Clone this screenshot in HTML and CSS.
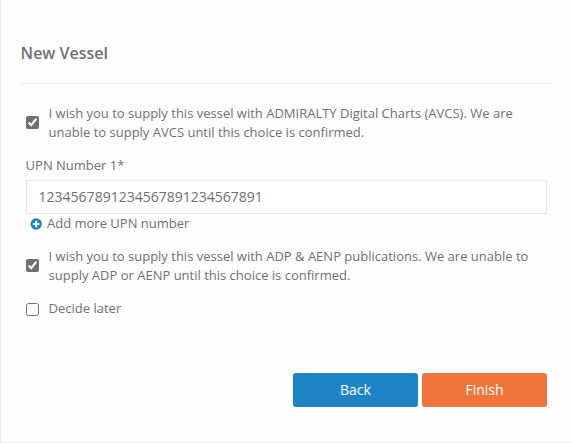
FILE: index.html
```
<!DOCTYPE html>
<html lang="en">
<head>
    <meta charset="UTF-8">
    <title>New Vessel</title>
    <link rel="stylesheet" href="styles.css">
</head>
<body>
    <div class="panel">
        <h2 class="title">New Vessel</h2>
        <form class="vessel-form">
            <label class="check">
                <input type="checkbox" checked>
                <span>I wish you to supply this vessel with ADMIRALTY Digital Charts (AVCS). We are<br>unable to supply AVCS until this choice is confirmed.</span>
            </label>
            <label class="upn-label" for="upn">UPN Number 1*</label>
            <input class="upn-input" id="upn" type="text" value="1234567891234567891234567891">
            <a class="add-more">
                <svg width="12" height="12" viewBox="0 0 12 12">
                    <circle cx="6.2" cy="6" r="5.7" fill="#1c84c6"/>
                    <path d="M6.2 2.7v6.6M2.9 6h6.6" stroke="#fff" stroke-width="2"/>
                </svg>
                <span>Add more UPN number</span>
            </a>
            <label class="check">
                <input type="checkbox" checked>
                <span>I wish you to supply this vessel with ADP &amp; AENP publications. We are unable to<br>supply ADP or AENP until this choice is confirmed.</span>
            </label>
            <label class="check later">
                <input type="checkbox">
                <span>Decide later</span>
            </label>
            <div class="buttons">
                <button type="button" class="btn back">Back</button>
                <button type="button" class="btn finish">Finish</button>
            </div>
        </form>
    </div>
</body>
</html>
```
FILE: styles.css
```
*{
    box-sizing: border-box;
}
body{
    margin: 0;
    font-family: "Open Sans", sans-serif;
    font-size: 13px;
    line-height: 19px;
    color: #6f7072;
    background-color: #fefefe;
}
.panel{
    height: 443px;
    padding: 42px 20px 0 19.6px;
    border-left: 1px solid #ececec;
    border-bottom: 1px solid #ececec;
}
.title{
    margin: 0;
    padding-bottom: 19px;
    font-size: 16px;
    font-weight: 600;
    line-height: 22px;
    border-bottom: 1px solid #ececec;
}
.vessel-form{
    padding: 20px 5px 0;
}
.check{
    display: flex;
    align-items: center;
    gap: 10px;
}
.check input{
    width: 13px;
    height: 13px;
    margin: 0 0 1px;
    accent-color: #6f6f6f;
}
.upn-label{
    display: block;
    margin: 14px 0 5px;
}
.upn-input{
    display: block;
    width: 100%;
    height: 34px;
    padding: 5px 12px 7px;
    font-family: inherit;
    font-size: 14px;
    color: inherit;
    background-color: #fff;
    border: 1px solid #e5e6e7;
}
.add-more{
    display: flex;
    align-items: center;
    gap: 5.4px;
    margin-bottom: 14px;
    padding-left: 4px;
}
.later{
    margin-top: 14px;
}
.later input{
    margin: 2px 0 0;
}
.buttons{
    display: flex;
    justify-content: flex-end;
    gap: 4px;
    margin-top: 55px;
}
.btn{
    width: 125px;
    height: 34px;
    padding: 0 0 1px;
    font-family: inherit;
    font-size: 14px;
    color: #fff;
    border: 0;
    border-radius: 3px;
}
.back{
    background-color: #1e84c6;
}
.finish{
    background-color: #f0753d;
}
```
